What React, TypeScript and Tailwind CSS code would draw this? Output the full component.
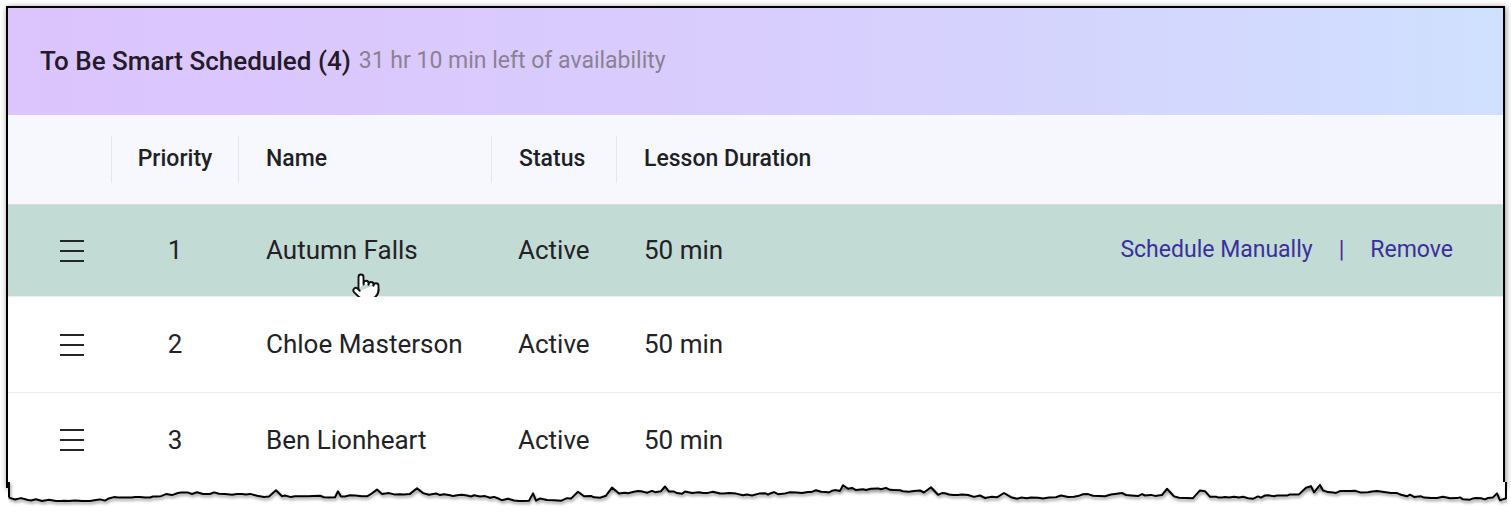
import React from "react";
import { Pointer } from "lucide-react";

const FONT = { fontFamily: "Roboto, 'Noto Sans', sans-serif" };

function jaggedPoints(width: number) {
  let seed = 12345;
  const rnd = () => {
    seed = (seed * 1103515245 + 12345) % 2147483648;
    return seed / 2147483648;
  };
  const pts: [number, number][] = [];
  let x = 0;
  let y = 14;
  while (x < width) {
    const base =
      13 +
      2.6 * Math.sin(x / 37) +
      2.2 * Math.sin(x / 83 + 1.3) +
      1.8 * Math.sin(x / 190 + 0.4);
    y = y * 0.4 + (base + (rnd() - 0.5) * 5) * 0.6;
    const bump = rnd() < 0.05 ? -6 : 0;
    pts.push([x, Math.max(2, Math.min(19, y + bump))]);
    x += 3 + Math.floor(rnd() * 5);
  }
  pts.push([width, 17]);
  return pts;
}

function TornEdge() {
  const W = 1499;
  const pts = jaggedPoints(W - 2).map(([x, y]) => [x + 1, y] as [number, number]);
  const line = pts.map(([x, y]) => `${x},${y.toFixed(1)}`).join(" ");
  const fill = `1,0 ${W - 1},0 ` + [...pts].reverse().map(([x, y]) => `${x},${y.toFixed(1)}`).join(" ");
  const first = pts[0];
  const last = pts[pts.length - 1];
  return (
    <svg
      className="absolute left-0 top-[calc(100%-6px)]"
      width={W}
      height={26}
      viewBox={`0 0 ${W} 26`}
    >
      <defs>
        <filter id="ts" x="-5%" y="-50%" width="110%" height="200%">
          <feDropShadow dx="1" dy="2" stdDeviation="1.4" floodColor="#000" floodOpacity="0.45" />
        </filter>
      </defs>
      <polygon points={fill} fill="#ffffff" />
      <g filter="url(#ts)">
        <polyline points={line} fill="none" stroke="#000" strokeWidth="2" strokeLinejoin="round" />
        <line x1={1} y1={0} x2={1} y2={first[1]} stroke="#000" strokeWidth="2" />
        <line x1={W - 1} y1={0} x2={W - 1} y2={last[1]} stroke="#000" strokeWidth="2" />
      </g>
    </svg>
  );
}

function Hamburger() {
  return (
    <div className="flex flex-col gap-[8px] w-[24px]">
      <div className="h-[2px] bg-[#262626]" />
      <div className="h-[2px] bg-[#262626]" />
      <div className="h-[2px] bg-[#262626]" />
    </div>
  );
}

function HeadCell({ w, children, center }: { w: string; children: React.ReactNode; center?: boolean }) {
  return (
    <div className={`flex items-center ${w}`}>
      <div className="w-px h-[47px] bg-[#e6e6ee]" />
      <div className={center ? "flex-1 text-center" : "pl-[27px]"}>{children}</div>
    </div>
  );
}

type RowData = { n: number; name: string; hl?: boolean; h: string };

function Row({ n, name, hl, h }: RowData) {
  return (
    <div className={`relative flex items-center border-b border-[#ececf0] ${h} ${hl ? "bg-[#c2dbd5]" : "bg-white"}`}>
      <div className="w-[103px] pl-[52px]">
        <Hamburger />
      </div>
      <div className="w-[127px] pl-px text-center">{n}</div>
      <div className="w-[253px] pl-[28px]">{name}</div>
      <div className="w-[125px] pl-[27px]">Active</div>
      <div className="pl-[28px]">50 min</div>
      {hl && (
        <>
          <div className="ml-auto pr-[50px] flex items-center gap-[26px] text-[23px] text-[#3a2f9e]">
            <span>Schedule Manually</span>
            <span className="text-[#4b2a9a]">|</span>
            <span>Remove</span>
          </div>
          <div className="absolute left-[343px] top-[67px]">
            <Pointer size={30} strokeWidth={1.5} color="#111" fill="#fff" />
          </div>
        </>
      )}
    </div>
  );
}

export default function App() {
  return (
    <div className="w-[1511px] h-[515px] bg-white overflow-hidden" style={FONT}>
      <div className="relative ml-[6px] mt-[6px] w-[1499px] border-x-2 border-t-2 border-black shadow-[1px_1px_6px_rgba(0,0,0,0.45)]">
        <div className="h-[107px] flex items-center pl-[32px] bg-linear-to-r from-[#dcc4fd] via-[#d8cdfd] to-[#cfe0fe]">
          <span className="text-[26px] font-medium text-[#231a2b]">To Be Smart Scheduled (4)</span>
          <span className="ml-[8px] text-[23px] text-[#8a8193]">31 hr 10 min left of availability</span>
        </div>
        <div className="h-[90px] flex items-center bg-[#f7f7fe] text-[23px] font-medium text-[#1f1f26] border-b border-[#dcdce4]">
          <div className="w-[103px]" />
          <HeadCell w="w-[127px]" center>Priority</HeadCell>
          <HeadCell w="w-[253px]">Name</HeadCell>
          <HeadCell w="w-[125px]">Status</HeadCell>
          <HeadCell w="w-[300px]">Lesson Duration</HeadCell>
        </div>
        <div className="text-[26px] text-[#222226]">
          <Row n={1} name="Autumn Falls" hl h="h-[92px]" />
          <Row n={2} name="Chloe Masterson" h="h-[96px]" />
          <Row n={3} name="Ben Lionheart" h="h-[95px]" />
        </div>
        <TornEdge />
      </div>
    </div>
  );
}
